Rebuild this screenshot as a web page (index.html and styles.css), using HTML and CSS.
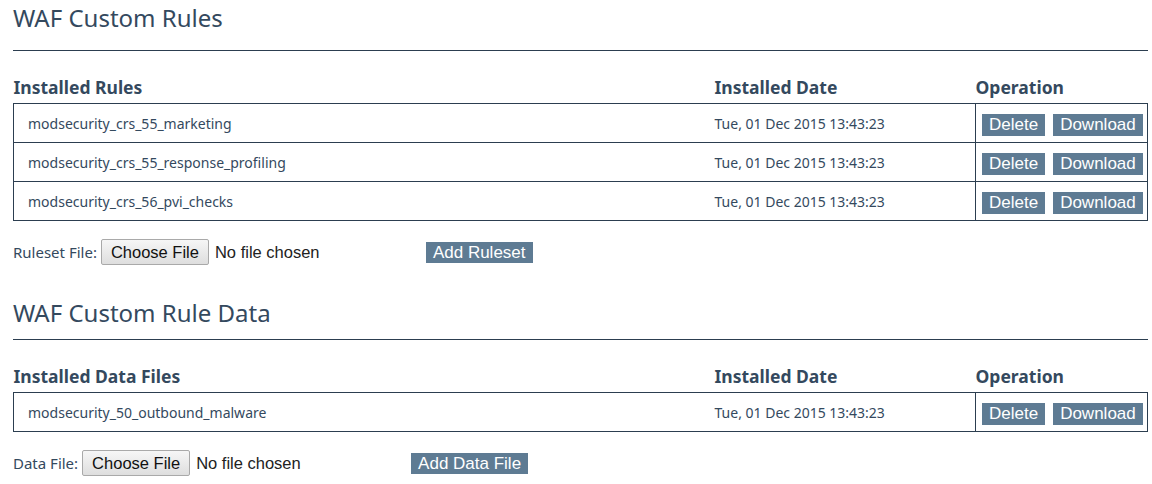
FILE: index.html
```html
<!DOCTYPE html>
<html lang="en">
<head>
    <meta charset="UTF-8">
    <title>WAF Custom Rules</title>
    <link rel="stylesheet" href="styles.css">
</head>
<body>
<div class="page">
    <div class="section first">
        <h2 class="title">WAF Custom Rules</h2>
        <hr class="rule">
        <table class="list">
            <thead>
                <tr>
                    <th class="col-name">Installed Rules</th>
                    <th class="col-date">Installed Date</th>
                    <th class="col-op">Operation</th>
                </tr>
            </thead>
            <tbody>
                <tr>
                    <td class="col-name">modsecurity_crs_55_marketing</td>
                    <td class="col-date">Tue, 01 Dec 2015 13:43:23</td>
                    <td class="col-op"><button class="btn">Delete</button><button class="btn">Download</button></td>
                </tr>
                <tr>
                    <td class="col-name">modsecurity_crs_55_response_profiling</td>
                    <td class="col-date">Tue, 01 Dec 2015 13:43:23</td>
                    <td class="col-op"><button class="btn">Delete</button><button class="btn">Download</button></td>
                </tr>
                <tr>
                    <td class="col-name">modsecurity_crs_56_pvi_checks</td>
                    <td class="col-date">Tue, 01 Dec 2015 13:43:23</td>
                    <td class="col-op"><button class="btn">Delete</button><button class="btn">Download</button></td>
                </tr>
            </tbody>
        </table>
        <form class="upload">
            <label class="upload-label">Ruleset File:</label>
            <input type="file" class="upload-file">
            <button type="button" class="btn add ruleset">Add Ruleset</button>
        </form>
    </div>

    <div class="section second">
        <h2 class="title">WAF Custom Rule Data</h2>
        <hr class="rule">
        <table class="list">
            <thead>
                <tr>
                    <th class="col-name">Installed Data Files</th>
                    <th class="col-date">Installed Date</th>
                    <th class="col-op">Operation</th>
                </tr>
            </thead>
            <tbody>
                <tr>
                    <td class="col-name">modsecurity_50_outbound_malware</td>
                    <td class="col-date">Tue, 01 Dec 2015 13:43:23</td>
                    <td class="col-op"><button class="btn">Delete</button><button class="btn">Download</button></td>
                </tr>
            </tbody>
        </table>
        <form class="upload">
            <label class="upload-label">Data File:</label>
            <input type="file" class="upload-file">
            <button type="button" class="btn add datafile">Add Data File</button>
        </form>
    </div>
</div>
</body>
</html>
```

FILE: styles.css
```css
body
{
    margin: 0;
    font-family: "Noto Sans", "Open Sans", sans-serif;
    color: #34495e;
    background: #fff;
}
.page
{
    padding: 0 4px 0 13px;
}
.title
{
    margin: 0;
    font-size: 24px;
    font-weight: normal;
    line-height: 32px;
    color: #34495e;
}
.first .title
{
    padding-top: 2px;
}
.second .title
{
    padding-top: 32px;
}
.rule
{
    margin: 0;
    border: none;
    border-top: 1px solid #2c3e50;
}
.first .rule
{
    margin-top: 16px;
}
.second .rule
{
    margin-top: 10px;
}
.list
{
    width: 100%;
    border-collapse: collapse;
    table-layout: fixed;
    margin-top: 24px;
}
.list th
{
    text-align: left;
    font-size: 17.5px;
    font-weight: bold;
    padding: 0 0 4px 0;
    line-height: 24px;
}
.list td
{
    font-size: 14px;
    height: 38px;
    padding: 0;
    vertical-align: middle;
}
.list tbody tr
{
    border: 1px solid #2c3e50;
}
.list .col-name
{
    width: 701px;
}
.list td.col-name
{
    padding-left: 14px;
}
.list .col-date
{
    width: 261px;
}
.list td.col-op
{
    border-left: 1px solid #2c3e50;
    height: 34px;
    padding: 4px 0 0 6px;
    white-space: nowrap;
}
.btn
{
    font-family: "Liberation Sans", Arial, sans-serif;
    font-size: 17px;
    color: #fff;
    background: #5e7b93;
    border: none;
    height: 22px;
    padding: 0 7px;
    margin-right: 8px;
    line-height: 22px;
    vertical-align: middle;
}
.upload
{
    display: flex;
    align-items: center;
    margin-top: 18px;
    height: 26px;
}
.upload-label
{
    font-size: 15px;
    margin-right: 4px;
}
.upload-file
{
    font-family: "Liberation Sans", Arial, sans-serif;
    font-size: 16.5px;
    color: #222;
    width: 320px;
}
.upload-file::file-selector-button
{
    font-family: "Liberation Sans", Arial, sans-serif;
    font-size: 16.5px;
    color: #111;
    height: 26px;
    padding: 0 9px;
    margin-right: 6px;
    background: linear-gradient(#f6f6f6, #dedede);
    border: 1px solid #a9a9a9;
    border-radius: 2px;
}
.add
{
    padding: 0 7px;
    height: 21px;
    line-height: 21px;
}
.ruleset
{
    margin-left: 5px;
}
.datafile
{
    margin-left: 9px;
}
```
